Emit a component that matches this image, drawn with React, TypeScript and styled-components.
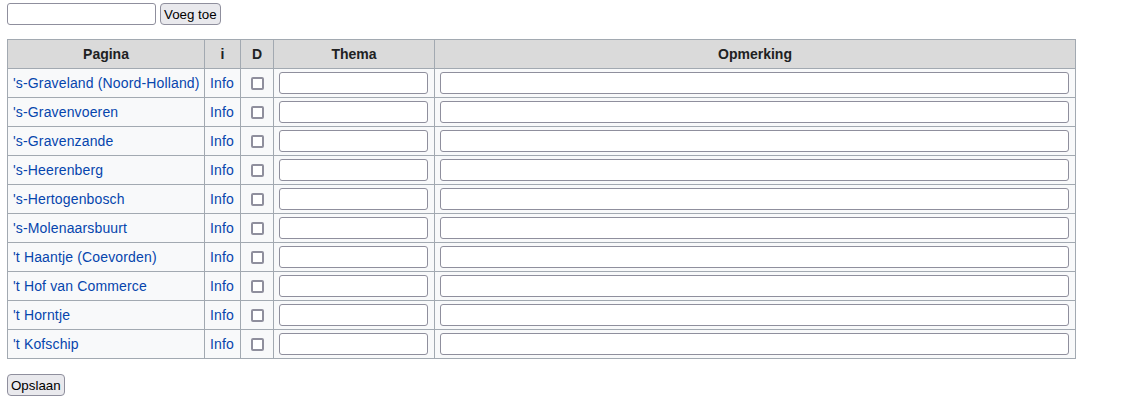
import React from "react";
import styled, { createGlobalStyle } from "styled-components";

const GlobalStyle = createGlobalStyle`
  body {
    margin: 0;
    background: #ffffff;
    font-family: "Liberation Sans", Arial, sans-serif;
    color: #202122;
  }
`;

const Page = styled.div`
  padding: 3px 7px;
`;

const AddBar = styled.div`
  display: flex;
  align-items: center;
  gap: 4px;
  height: 22px;
`;

const TextField = styled.input<{ fieldWidth: number }>`
  box-sizing: border-box;
  width: ${(p) => p.fieldWidth}px;
  height: 22px;
  margin: 0;
  padding: 0 4px;
  border: 1px solid #8f8f9d;
  border-radius: 3px;
  background: #ffffff;
  font-family: "Liberation Sans", Arial, sans-serif;
  font-size: 13.33px;
`;

const Button = styled.button`
  box-sizing: border-box;
  height: 22px;
  margin: 0;
  padding: 0 3px;
  border: 1px solid #8f8f9d;
  border-radius: 4px;
  background: #e9e9ed;
  color: #000000;
  font-family: "Liberation Sans", Arial, sans-serif;
  font-size: 13.33px;
`;

const Table = styled.table`
  margin-top: 14px;
  width: 1069px;
  border-collapse: collapse;
  table-layout: fixed;
  background: #f8f9fa;
  border: 1px solid #a2a9b1;
  font-size: 14px;
`;

const Head = styled.th`
  height: 28px;
  padding: 0 5px;
  background: #dadada;
  border: 1px solid #a2a9b1;
  font-weight: bold;
  text-align: center;
  color: #202122;
`;

const Cell = styled.td`
  height: 28px;
  padding: 0 5px;
  border: 1px solid #a2a9b1;
  vertical-align: middle;
  white-space: nowrap;
`;

const CellInner = styled.div`
  display: flex;
  align-items: center;
  justify-content: center;
`;

const Link = styled.a`
  color: #0645ad;
  text-decoration: none;
  letter-spacing: 0.15px;
`;

const Check = styled.input`
  appearance: none;
  box-sizing: border-box;
  width: 13px;
  height: 13px;
  margin: 0;
  border: 2px solid #8f8f9d;
  border-radius: 2px;
  background: #ffffff;
`;

const Footer = styled.div`
  margin-top: 15px;
`;

const pages = [
  "'s-Graveland (Noord-Holland)",
  "'s-Gravenvoeren",
  "'s-Gravenzande",
  "'s-Heerenberg",
  "'s-Hertogenbosch",
  "'s-Molenaarsbuurt",
  "'t Haantje (Coevorden)",
  "'t Hof van Commerce",
  "'t Horntje",
  "'t Kofschip",
];

export default function App() {
  return (
    <Page>
      <GlobalStyle />
      <AddBar>
        <TextField type="text" fieldWidth={149} />
        <Button>Voeg toe</Button>
      </AddBar>
      <Table>
        <colgroup>
          <col style={{ width: 197 }} />
          <col style={{ width: 36 }} />
          <col style={{ width: 33 }} />
          <col style={{ width: 161 }} />
          <col />
        </colgroup>
        <thead>
          <tr>
            <Head>Pagina</Head>
            <Head>i</Head>
            <Head>D</Head>
            <Head>Thema</Head>
            <Head>Opmerking</Head>
          </tr>
        </thead>
        <tbody>
          {pages.map((p) => (
            <tr key={p}>
              <Cell>
                <Link href="#">{p}</Link>
              </Cell>
              <Cell>
                <Link href="#">Info</Link>
              </Cell>
              <Cell>
                <CellInner>
                  <Check type="checkbox" />
                </CellInner>
              </Cell>
              <Cell>
                <TextField type="text" fieldWidth={149} />
              </Cell>
              <Cell>
                <TextField type="text" fieldWidth={629} />
              </Cell>
            </tr>
          ))}
        </tbody>
      </Table>
      <Footer>
        <Button>Opslaan</Button>
      </Footer>
    </Page>
  );
}
